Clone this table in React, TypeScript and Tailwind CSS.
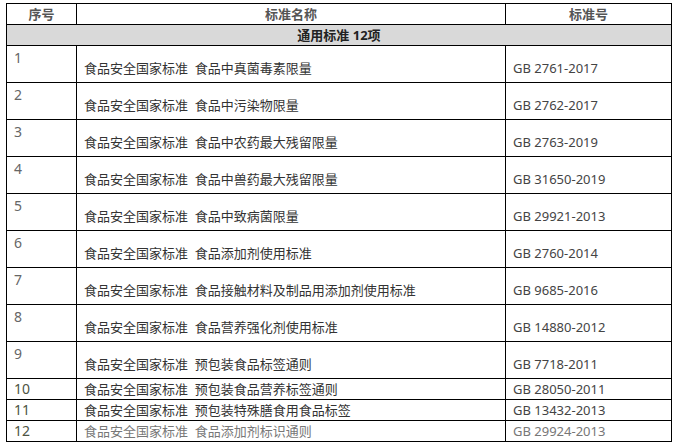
import React from 'react';

const rows: [string, string, string][] = [
  ['1', '食品安全国家标准  食品中真菌毒素限量', 'GB 2761-2017'],
  ['2', '食品安全国家标准  食品中污染物限量', 'GB 2762-2017'],
  ['3', '食品安全国家标准  食品中农药最大残留限量', 'GB 2763-2019'],
  ['4', '食品安全国家标准  食品中兽药最大残留限量', 'GB 31650-2019'],
  ['5', '食品安全国家标准  食品中致病菌限量', 'GB 29921-2013'],
  ['6', '食品安全国家标准  食品添加剂使用标准', 'GB 2760-2014'],
  ['7', '食品安全国家标准  食品接触材料及制品用添加剂使用标准', 'GB 9685-2016'],
  ['8', '食品安全国家标准  食品营养强化剂使用标准', 'GB 14880-2012'],
  ['9', '食品安全国家标准  预包装食品标签通则', 'GB 7718-2011'],
];

const shortRows: [string, string, string][] = [
  ['10', '食品安全国家标准  预包装食品营养标签通则', 'GB 28050-2011'],
  ['11', '食品安全国家标准  预包装特殊膳食用食品标签', 'GB 13432-2013'],
  ['12', '食品安全国家标准  食品添加剂标识通则', 'GB 29924-2013'],
];

const font = { fontFamily: '"Noto Sans", "Noto Sans CJK SC", sans-serif' };

export default function App() {
  return (
    <div className="w-[678px] h-[444px] bg-white pt-[3px] pl-[6px]" style={font}>
      <table className="border-collapse table-fixed w-[665px] text-[13px] leading-none">
        <colgroup>
          <col className="w-[70px]" />
          <col className="w-[429px]" />
          <col className="w-[166px]" />
        </colgroup>
        <thead>
          <tr className="h-[21px]">
            <th className="border border-black text-[#555] font-bold text-center">序号</th>
            <th className="border border-black text-[#555] font-bold text-center">标准名称</th>
            <th className="border border-black text-[#555] font-bold text-center">标准号</th>
          </tr>
        </thead>
        <tbody>
          <tr className="h-[21px] bg-[#d9d9d9]">
            <td colSpan={3} className="border border-black text-center font-bold text-[#222]">
              通用标准 12项
            </td>
          </tr>
          {rows.map(([no, name, code]) => (
            <tr key={no} className="h-[37px]">
              <td className="border border-black align-top pl-[7px] pt-[5px] text-[14px] text-[#666]">{no}</td>
              <td className="border border-black align-top pl-[7px] pt-[16px] text-[#333] whitespace-pre">{name}</td>
              <td className="border border-black align-top pl-[7px] pt-[16px] text-[#444]">{code}</td>
            </tr>
          ))}
          {shortRows.map(([no, name, code]) => {
            const last = no === '12';
            return (
              <tr key={no} className="h-[21px]">
                <td className="border border-black pl-[7px] text-[14px] text-[#4d5343]">{no}</td>
                <td className={`border border-black pl-[7px] whitespace-pre ${last ? 'text-[#777]' : 'text-[#333]'}`}>{name}</td>
                <td className={`border border-black pl-[7px] ${last ? 'text-[#777]' : 'text-[#444]'}`}>{code}</td>
              </tr>
            );
          })}
        </tbody>
      </table>
    </div>
  );
}
